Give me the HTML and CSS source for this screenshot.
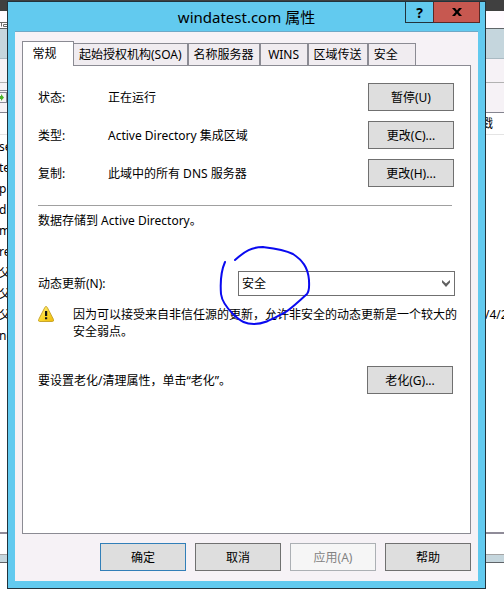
FILE: index.html
```
<!DOCTYPE html>
<html lang="zh-CN">
<head>
<meta charset="utf-8">
<meta name="viewport" content="width=device-width, initial-scale=1">
<title>windatest.com 属性</title>
<link rel="stylesheet" href="styles.css">
</head>
<body>

<!-- DNS manager window behind the dialog -->
<div class="manager">
  <div class="desktop"></div>
  <div class="manager-title">
    <svg class="manager-icon" width="8" height="6" viewBox="0 0 8 6">
      <path d="M0 .5H7M1.500 .5V4.500M3.500 2.500H7M3.500 2.500V4.500H7" fill="none" stroke="#6b6b68"/>
    </svg>
  </div>
  <div class="manager-caption"></div>
  <div class="manager-menu"></div>
  <div class="manager-tools">
    <svg class="manager-arrow" width="7" height="13" viewBox="0 0 7 13">
      <path d="M0 .5H7M0 2.500H7M0 12.500H7M6.500 3V12" fill="none" stroke="#8b8c99"/>
      <path d="M0 6H1V4L4 7.500L1 11V9H0Z" fill="#4cb32b"/>
    </svg>
  </div>
  <div class="manager-header"><span>戳</span></div>
  <div class="manager-list">
    <div class="record"><span>se</span></div>
    <div class="record"><span>te</span></div>
    <div class="record"><span>p</span></div>
    <div class="record"><span>dp</span></div>
    <div class="record"><span>m</span></div>
    <div class="record"><span>re</span></div>
    <div class="record"><span>父</span></div>
    <div class="record"><span>父</span></div>
    <div class="record"><span>父</span><span class="date">/4/2</span></div>
    <div class="record"><span>nc</span></div>
  </div>
  <div class="manager-status"></div>
  <div class="manager-edge"></div>
  <div class="manager-below"></div>
</div>

<main class="dialog">
  <header class="titlebar">
    <h1>windatest.com 属性</h1>
    <div class="caption-buttons">
      <button type="button" class="help" aria-label="帮助">?</button>
      <button type="button" class="close" aria-label="关闭">
        <svg width="10" height="8" viewBox="0 0 10 8">
          <path d="M0 0H3L5 2.500L7 0H10L6.500 4L10 8H7L5 5.500L3 8H0L3.500 4Z"/>
        </svg>
      </button>
    </div>
  </header>

  <div class="client">
    <div class="tabs" role="tablist">
      <button type="button" role="tab" class="active" aria-selected="true">常规</button>
      <button type="button" role="tab">起始授权机构(SOA)</button>
      <button type="button" role="tab">名称服务器</button>
      <button type="button" role="tab">WINS</button>
      <button type="button" role="tab">区域传送</button>
      <button type="button" role="tab">安全</button>
    </div>

    <section class="panel">
      <div class="zone">
        <div class="zone-row">
          <span>状态:</span>
          <span>正在运行</span>
          <button type="button" class="btn">暂停(U)</button>
        </div>
        <div class="zone-row">
          <span>类型:</span>
          <span>Active Directory 集成区域</span>
          <button type="button" class="btn">更改(C)...</button>
        </div>
        <div class="zone-row">
          <span>复制:</span>
          <span>此域中的所有 DNS 服务器</span>
          <button type="button" class="btn">更改(H)...</button>
        </div>
      </div>

      <hr>
      <p class="storage">数据存储到 Active Directory。</p>

      <div class="update">
        <label for="update">动态更新(N):</label>
        <div class="combo">
          <select id="update">
            <option>安全</option>
            <option>非安全</option>
            <option>无</option>
          </select>
          <svg class="chevron" width="8" height="7" viewBox="0 0 8 7">
            <path d="M0 0L4 3.500L8 0V2.500L4 7L0 2.500Z" fill="#606060"/>
          </svg>
          <!-- pen mark round the selected value -->
          <svg class="pen" width="96" height="82" viewBox="0 0 96 82">
            <path d="M9 18C5 27 4 36 5 50C6 58 11 64 17 70C25 78 30 80 38 80C49 80 58 74 68 69C75 65 84 56 91 50C94 46 93 41 93 36C92 23 86 16 77 10C67 5 56 4 47 3C36 3 29 7 19 16"/>
          </svg>
        </div>
      </div>

      <div class="warning">
        <svg width="17" height="16" viewBox="0 0 17 16">
          <defs>
            <linearGradient id="amber" x1="0" y1="0" x2="1" y2="1">
              <stop offset="0" stop-color="#fff3a0"/>
              <stop offset=".5" stop-color="#fbd92e"/>
              <stop offset="1" stop-color="#eeb90c"/>
            </linearGradient>
          </defs>
          <path d="M8 .5Q8.800 .5 9.300 1.500L15.500 13.500Q16 15.500 14.500 15.500H1.500Q0 15.500 .7 13.500L6.800 1.500Q7.200 .5 8 .5Z" fill="url(#amber)" stroke="#c9a62d"/>
          <path d="M7 5H9.200V10H7ZM7 11.200H9.200V13.300H7Z" fill="#141414"/>
        </svg>
        <p>因为可以接受来自非信任源的更新，允许非安全的动态更新是一个较大的安全弱点。</p>
      </div>

      <div class="aging">
        <p>要设置老化/清理属性，单击“老化”。</p>
        <button type="button" class="btn">老化(G)...</button>
      </div>
    </section>

    <footer class="actions">
      <button type="button" class="btn default">确定</button>
      <button type="button" class="btn">取消</button>
      <button type="button" class="btn" disabled>应用(A)</button>
      <button type="button" class="btn">帮助</button>
    </footer>
  </div>
</main>

</body>
</html>
```
FILE: styles.css
```
* {
  box-sizing: border-box;
}

/* Both windows share one grid cell, the dialog lies on top */
body {
  margin: 0;
  min-height: 100vh;
  display: grid;
  grid-template-columns: minmax(0, 1fr);
  background: #ffffff;
  color: #000000;
  font-family: "Noto Sans", "Noto Sans CJK SC", sans-serif;
  font-size: 12px;
  line-height: 17px;
}

button,
select {
  font: inherit;
  color: inherit;
  margin: 0;
  padding: 0;
}

h1,
p {
  margin: 0;
  font-weight: normal;
}

svg {
  display: block;
}

/* Manager window */
.manager,
.dialog {
  grid-area: 1 / 1;
}

.manager {
  display: flex;
  flex-direction: column;
}

.desktop {
  height: 11px;
  background: #404040;
}

.manager-title {
  height: 18px;
  padding-top: 11px;
  background: #fffbff;
  border-bottom: 1px solid #5f6468;
}

.manager-caption {
  height: 30px;
  background: #c5d6dd;
  border-bottom: 1px solid #a9bac2;
}

.manager-menu {
  height: 24px;
  background: #f6f2f6;
  border-bottom: 1px solid #b2b2b2;
}

.manager-tools {
  height: 30px;
  padding-top: 7px;
  background: #f6f2f6;
  border-bottom: 1px solid #84848f;
}

.manager-header {
  height: 22px;
  display: flex;
  justify-content: flex-end;
  padding: 2px 11px 0 0;
  border-bottom: 1px solid #e4e4e4;
}

.manager-list {
  flex: 1;
  padding-top: 1px;
}

.record {
  height: 21px;
  display: flex;
  justify-content: space-between;
  margin-left: -1px;
  overflow: hidden;
  line-height: 21px;
}

.date {
  width: 19px;
}

.manager-status {
  height: 23px;
  border-top: 2px solid #8f8b98;
  border-bottom: 1px solid #a5a5a5;
}

.manager-edge {
  height: 8px;
  background: #c5d6dd;
  border-bottom: 1px solid #5f6468;
}

.manager-below {
  height: 32px;
}

/* Dialog window */
.dialog {
  align-self: start;
  margin: 1px 18px 6px 7px;
  padding: 0 7px 7px;
  background: #62caef;
  border: 1px solid #22333c;
}

.titlebar {
  height: 29px;
  display: grid;
  grid-template-columns: 1fr auto 1fr;
}

.titlebar h1 {
  grid-column: 2;
  font-size: 15px;
  line-height: 30px;
}

.caption-buttons {
  display: flex;
  justify-self: end;
  margin-right: -2px;
}

.caption-buttons button {
  height: 21px;
  display: flex;
  align-items: center;
  justify-content: center;
  border: 1px solid #22333c;
  border-top: 0;
}

.caption-buttons .help {
  width: 28px;
  background: #62caef;
  border-right: 0;
  font-size: 14px;
  font-weight: bold;
}

.caption-buttons .close {
  width: 47px;
  background: #c75850;
  border-color: #5a2926;
}

.client {
  padding: 9px 7px 10px;
  background: #f6f2f6;
  border-top: 1px solid #6fa8c6;
}

/* Tabs */
.tabs {
  display: flex;
  align-items: flex-end;
}

.tabs button {
  height: 22px;
  min-width: 48px;
  padding: 0 5px;
  background: #f0ecf0;
  border: 1px solid #8b8b93;
  border-bottom: 0;
  white-space: nowrap;
}

.tabs .active {
  position: relative;
  height: 25px;
  min-width: 52px;
  margin-bottom: -1px;
  padding: 0 14px 2px 7px;
  background: #ffffff;
}

.tabs .active + button {
  border-left: 0;
}

.tabs button:last-child {
  text-align: left;
}

.panel {
  min-height: 469px;
  padding: 17px 16px 17px 15px;
  background: #ffffff;
  border: 1px solid #8b8b93;
}

.btn {
  width: 86px;
  height: 28px;
  background: #dedede;
  border: 1px solid #707070;
}

.btn.default {
  border-color: #327fb8;
}

.btn:disabled {
  background: #f6f6f6;
  border-color: #acb0b4;
  color: #838383;
}

/* General tab */
.zone {
  display: grid;
  gap: 10px;
}

.zone-row {
  display: grid;
  grid-template-columns: 70px 1fr auto;
  align-items: center;
}

hr {
  margin: 18px 2px 6px 0;
  border: 0;
  border-top: 1px solid #a0a0a0;
}

.update {
  display: flex;
  align-items: center;
  margin: 42px -1px 0 0;
}

.update label {
  width: 200px;
}

.combo {
  position: relative;
  flex: 1;
}

.combo select {
  display: block;
  width: 100%;
  height: 25px;
  padding-left: 3px;
  appearance: none;
  background: #ffffff;
  border: 1px solid #707070;
  border-radius: 0;
}

.chevron {
  position: absolute;
  top: 9px;
  right: 5px;
  pointer-events: none;
}

.pen {
  position: absolute;
  top: -27px;
  left: -22px;
  fill: none;
  stroke: #0a0af0;
  stroke-width: 2;
  stroke-linecap: round;
  pointer-events: none;
}

.warning {
  display: flex;
  gap: 18px;
  margin: 10px -4px 0 0;
}

.warning svg {
  flex: none;
}

.aging {
  display: flex;
  align-items: center;
  justify-content: space-between;
  margin: 26px 1px 0 0;
}

.actions {
  display: flex;
  justify-content: flex-end;
  gap: 9px;
  margin-top: 9px;
}
```
